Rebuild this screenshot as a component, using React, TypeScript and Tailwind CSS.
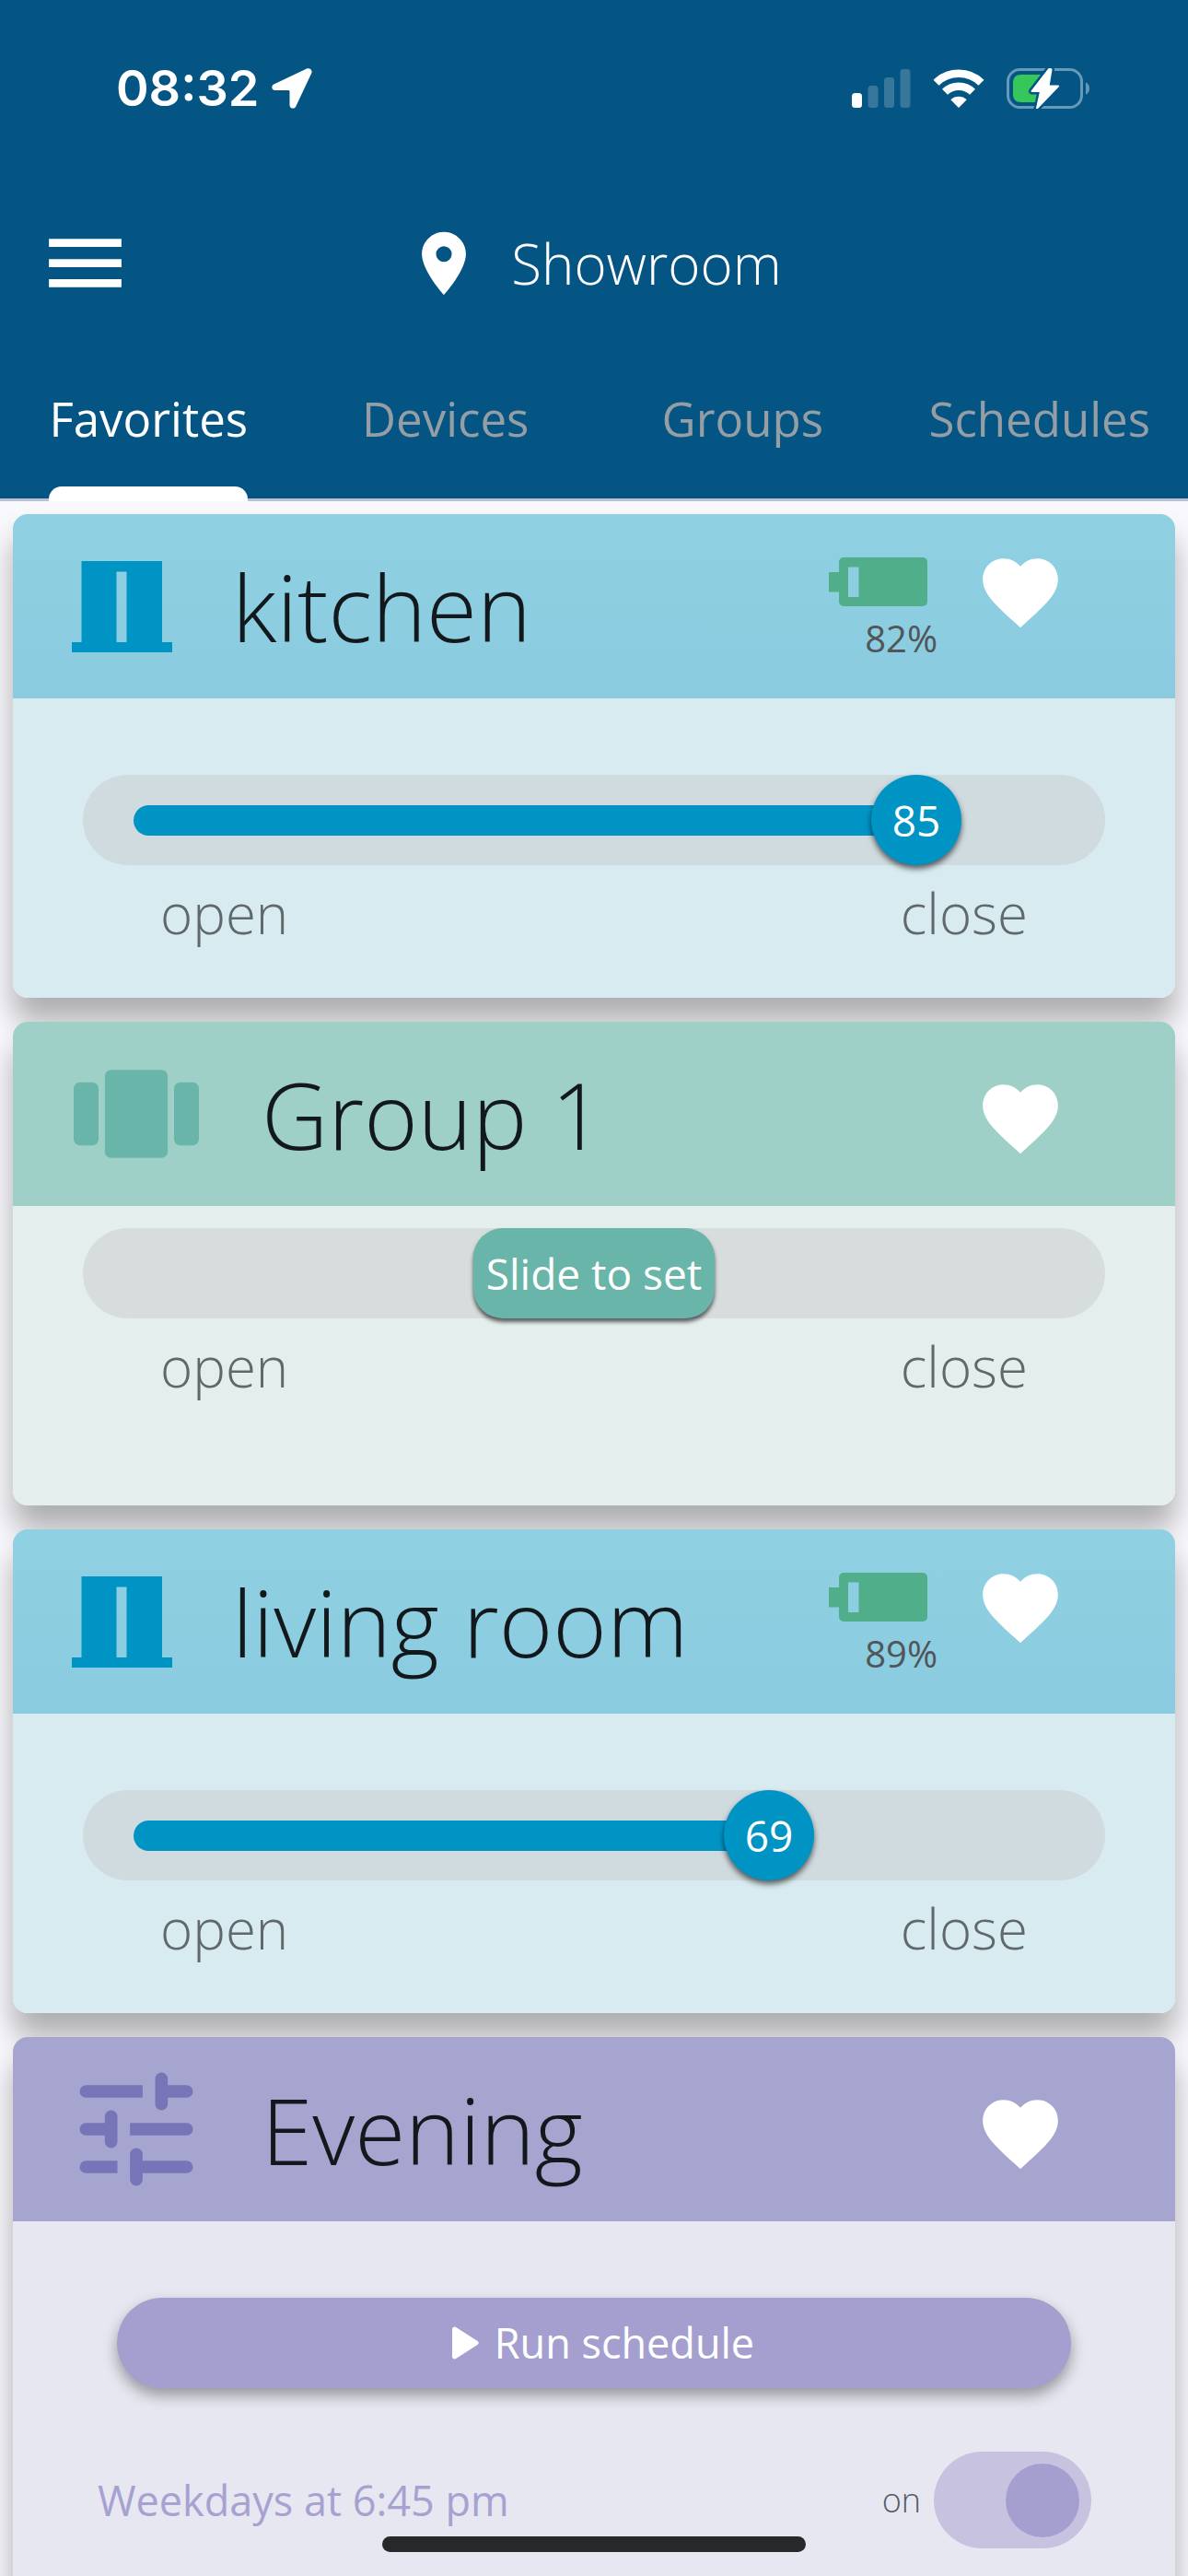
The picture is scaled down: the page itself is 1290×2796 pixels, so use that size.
import React, { useState } from 'react';
import { MdFavorite, MdLocationOn, MdMenu } from 'react-icons/md';

type Theme = {
  header: string;
  body: string;
  track: string;
  accent: string;
};

const blue: Theme = {
  header: 'bg-linear-to-b from-[#8fd0e3] to-[#8acbdf]',
  body: 'bg-[#d8ebf1]',
  track: 'bg-[#d0dbe0]',
  accent: 'bg-[#0094c5]',
};

const green: Theme = {
  header: 'bg-[#9ed0c7]',
  body: 'bg-[#e4efed]',
  track: 'bg-[#d7dddd]',
  accent: 'bg-[#69b5a9]',
};

const purple: Theme = {
  header: 'bg-[#a6a5d0]',
  body: 'bg-[#e6e7f0]',
  track: 'bg-[#c6c2df]',
  accent: 'bg-[#a59fd0]',
};

/* ---------- Icons ---------- */

function ArrowIcon() {
  return (
    <svg width="44" height="44" viewBox="0 0 44 44" fill="#fff" aria-hidden="true">
      <path d="M37.6 .7 2.3 17.4C-.9 19-.1 24 3.6 24H18c1 0 1.500.5 1.500 1.500V40c0 4 5.200 5 6.800 1.400L43.200 5.600C44.800 2.200 41.200-1 37.600.7Z" />
    </svg>
  );
}

function SignalIcon() {
  return (
    <svg width="64" height="42" viewBox="0 0 64 42" fill="#fff" aria-hidden="true">
      <rect x="0" y="26" width="11" height="16" rx="3.500" />
      <rect x="17.500" y="18" width="11" height="24" rx="3.500" opacity=".2" />
      <rect x="35" y="9" width="11" height="33" rx="3.500" opacity=".2" />
      <rect x="52.500" y="0" width="11" height="42" rx="3.500" opacity=".2" />
    </svg>
  );
}

function WifiIcon() {
  return (
    <svg width="56" height="42" viewBox="0 0 56 42" aria-hidden="true">
      <g fill="none" stroke="#fff" strokeWidth="8.500">
        <path d="M3.500 14.800A35 35 0 0 1 52.500 14.800" />
        <path d="M13 24.800A21.500 21.500 0 0 1 43 24.800" />
      </g>
      <path d="M28 42 19.300 33.200C24 28.700 32 28.700 36.700 33.200Z" fill="#fff" />
    </svg>
  );
}

function PhoneBatteryIcon() {
  const bolt = 'M46.500 .5 27.500 25H37L33 43.500 56 19.500H45.500L48.500 1.500Z';
  return (
    <svg width="92" height="44" viewBox="0 0 92 44" aria-hidden="true">
      <rect x="1.500" y="1.500" width="80" height="41" rx="13" fill="none" stroke="#6899ba" strokeWidth="3" />
      <path d="M86 15.500C91.300 17.500 91.300 26.500 86 28.500Z" fill="#6899ba" />
      <path d="M16 7H42V37H16C10 37 7 34 7 28V16C7 10 10 7 16 7Z" fill="#35c759" />
      <path d={bolt} fill="#fff" stroke="#045583" strokeWidth="7" strokeLinejoin="round" />
      <path d={bolt} fill="#fff" stroke="#fff" strokeWidth="2" strokeLinejoin="round" />
    </svg>
  );
}

function CurtainIcon() {
  return (
    <svg width="132" height="164" viewBox="0 0 132 164" fill="#0094c5" aria-hidden="true">
      <path d="M22.500 33H110V121H71.500V44.500H60.500V121H22.500Z" />
      <path d="M12 121H121V132H12Z" />
    </svg>
  );
}

function CarouselIcon() {
  return (
    <svg width="164" height="164" viewBox="0 0 24 24" fill="#69b5a9" aria-hidden="true">
      <rect x="2.050" y="7" width="3.950" height="10" rx="1" />
      <rect x="7" y="5" width="10" height="14" rx="1" />
      <rect x="18" y="7" width="3.950" height="10" rx="1" />
    </svg>
  );
}

function TuneIcon() {
  return (
    <svg width="164" height="164" viewBox="0 0 24 24" fill="#7774b8" aria-hidden="true">
      <path d="M4 5H13V7H4A1 1 0 0 1 4 5ZM16 3A1 1 0 0 1 17 4V5H20A1 1 0 0 1 20 7H17V8A1 1 0 0 1 15 8V4A1 1 0 0 1 16 3Z" />
      <path d="M8 9A1 1 0 0 1 9 10V14A1 1 0 0 1 7 14V13H4A1 1 0 0 1 4 11H7V10A1 1 0 0 1 8 9ZM11 11H20A1 1 0 0 1 20 13H11Z" />
      <path d="M4 17H9V19H4A1 1 0 0 1 4 17ZM12 15A1 1 0 0 1 13 16V17H20A1 1 0 0 1 20 19H13V20A1 1 0 0 1 11 20V16A1 1 0 0 1 12 15Z" />
    </svg>
  );
}

function BatteryIcon() {
  return (
    <svg width="107" height="53" viewBox="0 0 107 53" fill="#50ae8a" aria-hidden="true">
      <path
        fillRule="evenodd"
        d="M16 0H102A5 5 0 0 1 107 5V48A5 5 0 0 1 102 53H16A5 5 0 0 1 11 48V37.500H0V16H11V5A5 5 0 0 1 16 0ZM21 10.500V43H32.500V10.500Z"
      />
    </svg>
  );
}

/* ---------- Cards ---------- */

type CardProps = {
  title: string;
  theme: Theme;
  icon: React.ReactNode;
  battery?: number;
  children: React.ReactNode;
};

function Card({ title, theme, icon, battery, children }: CardProps) {
  const hasBattery = battery !== undefined;
  return (
    <section className="shrink-0 rounded-2xl shadow-[0_26px_32px_rgba(0,0,0,0.3)]">
      <header className={`flex h-[200px] items-center gap-[54px] rounded-t-2xl pr-[119px] pl-[52px] ${theme.header}`}>
        {icon}
        <h2 className="flex-1 text-[100px] leading-[98px] font-light text-[#12181b]">{title}</h2>
        <div className={`flex h-full items-start gap-[41px] ${hasBattery ? 'pt-9' : 'pt-14'}`}>
          {hasBattery && (
            <div className="w-[118px] pt-[11px]">
              <BatteryIcon />
              <p className="pt-[10px] text-right text-[40px] leading-[50px] text-[#505659]">{battery}%</p>
            </div>
          )}
          <button type="button" aria-label={`Remove ${title} from favorites`}>
            <MdFavorite size={98} color="#fff" />
          </button>
        </div>
      </header>
      <div className={`min-h-[325px] rounded-b-2xl ${theme.body}`}>{children}</div>
    </section>
  );
}

type SliderProps = {
  name: string;
  theme: Theme;
  initial?: number;
};

function PositionSlider({ name, theme, initial }: SliderProps) {
  const [value, setValue] = useState(initial);
  const isSet = value !== undefined;

  return (
    <div className="px-[76px]">
      <div className={`relative h-[98px] rounded-full px-[55px] focus-within:ring-4 ${theme.track}`}>
        {isSet ? (
          <div className="flex h-full items-center">
            <div className={`h-[33px] shrink-0 rounded-full ${theme.accent}`} style={{ width: `${value}%` }} />
            <div
              className={`-ml-[49px] flex size-[98px] shrink-0 items-center justify-center rounded-full text-[46px] text-white shadow-[0_4px_6px_rgba(0,0,0,0.6)] ${theme.accent}`}
            >
              {value}
            </div>
          </div>
        ) : (
          <div className="flex h-full justify-center">
            <div
              className={`flex items-center rounded-[32px] px-[14px] text-[46px] text-white shadow-[0_4px_4px_rgba(0,0,0,0.6)] ${theme.accent}`}
            >
              Slide to set
            </div>
          </div>
        )}
        <input
          type="range"
          min={0}
          max={100}
          value={value ?? 50}
          onChange={(e) => setValue(Number(e.target.value))}
          aria-label={`${name} position`}
          className="absolute inset-x-[6px] inset-y-0 cursor-pointer opacity-0"
        />
      </div>
      <div className="flex justify-between px-[84px] pt-3 text-6xl leading-[80px] font-light text-[#60686b]">
        <span>open</span>
        <span>close</span>
      </div>
    </div>
  );
}

function ScheduleBody() {
  const [enabled, setEnabled] = useState(true);

  return (
    <div className="pt-[83px] pb-20">
      <div className="px-[113px]">
        <button
          type="button"
          className={`flex h-[98px] w-full items-center justify-center gap-4 rounded-full pl-5 text-[45px] text-white shadow-[0_8px_16px_rgba(0,0,0,0.35)] ${purple.accent}`}
        >
          <svg width="30" height="36" viewBox="0 0 30 36" fill="#fff" aria-hidden="true">
            <path d="M0 3.500C0 .8 2.500-.1 4.500 1.200L27.500 16C29.200 17.200 29.200 18.800 27.500 20L4.500 34.800C2.500 36.100 0 35.200 0 32.500Z" />
          </svg>
          Run schedule
        </button>
      </div>
      <div className="flex items-center justify-between pt-[69px] pr-[91px] pl-[92px]">
        <p className="text-[45px] text-[#a7a1d2]">Weekdays at 6:45 pm</p>
        <label className="flex cursor-pointer items-center gap-[14px]">
          <span className="text-4xl font-light text-[#555a66]">{enabled ? 'on' : 'off'}</span>
          <input
            type="checkbox"
            role="switch"
            checked={enabled}
            onChange={(e) => setEnabled(e.target.checked)}
            className="peer sr-only"
          />
          <span
            className={`flex h-[105px] w-[171px] items-center rounded-full px-[13px] peer-checked:justify-end ${purple.track}`}
          >
            <span className={`size-20 rounded-full ${purple.accent}`} />
          </span>
        </label>
      </div>
    </div>
  );
}

/* ---------- Page ---------- */

const tabs = ['Favorites', 'Devices', 'Groups', 'Schedules'];

export default function App() {
  const [activeTab, setActiveTab] = useState('Favorites');

  return (
    <div className="flex h-screen flex-col bg-[#f9f9fd] font-['Open_Sans',sans-serif]">
      <div className="z-10 shrink-0 bg-[#045583] shadow-[0_3px_0_#bcc1cf]">
        {/* Status bar */}
        <div className="flex items-center justify-between pt-[60px] pr-[105px] pl-[126px] text-white">
          <div className="flex items-center gap-[14px]">
            <span className="font-['Inter',sans-serif] text-[54px] leading-[72px] font-semibold">08:32</span>
            <ArrowIcon />
          </div>
          <div className="flex items-center gap-6">
            <SignalIcon />
            <WifiIcon />
            <PhoneBatteryIcon />
          </div>
        </div>

        {/* Location */}
        <div className="grid grid-cols-[1fr_auto_1fr] items-center px-10 pt-[101px]">
          <button type="button" aria-label="Menu" className="justify-self-start">
            <MdMenu size={105} color="#fff" />
          </button>
          <button type="button" className="flex items-center gap-8 text-6xl font-light text-white">
            <MdLocationOn size={82} />
            Showroom
          </button>
        </div>

        {/* Tabs */}
        <nav className="grid grid-cols-4 pt-[77px]">
          {tabs.map((tab) => {
            const active = tab === activeTab;
            return (
              <button key={tab} type="button" onClick={() => setActiveTab(tab)} className="flex justify-center">
                <span className="flex flex-col">
                  <span className={`text-[51px] leading-[78px] ${active ? 'text-white' : 'text-[#959ea5]'}`}>{tab}</span>
                  <span className={`mt-[35px] -mb-[3px] h-4 rounded-t-[14px] ${active ? 'bg-white' : ''}`} />
                </span>
              </button>
            );
          })}
        </nav>
      </div>

      {/* Favorites */}
      <main className="flex flex-1 flex-col gap-[26px] overflow-y-auto px-[14px] pt-[17px] pb-24 [scrollbar-width:none]">
        <Card title="kitchen" theme={blue} icon={<CurtainIcon />} battery={82}>
          <div className="pt-[83px]">
            <PositionSlider name="kitchen" theme={blue} initial={85} />
          </div>
        </Card>
        <Card title="Group 1" theme={green} icon={<CarouselIcon />}>
          <div className="pt-6">
            <PositionSlider name="Group 1" theme={green} />
          </div>
        </Card>
        <Card title="living room" theme={blue} icon={<CurtainIcon />} battery={89}>
          <div className="pt-[83px]">
            <PositionSlider name="living room" theme={blue} initial={69} />
          </div>
        </Card>
        <Card title="Evening" theme={purple} icon={<TuneIcon />}>
          <ScheduleBody />
        </Card>
      </main>

      {/* Home indicator */}
      <div className="fixed bottom-[26px] left-1/2 z-20 h-[17px] w-[460px] -translate-x-1/2 rounded-full bg-[#272829]" />
    </div>
  );
}
